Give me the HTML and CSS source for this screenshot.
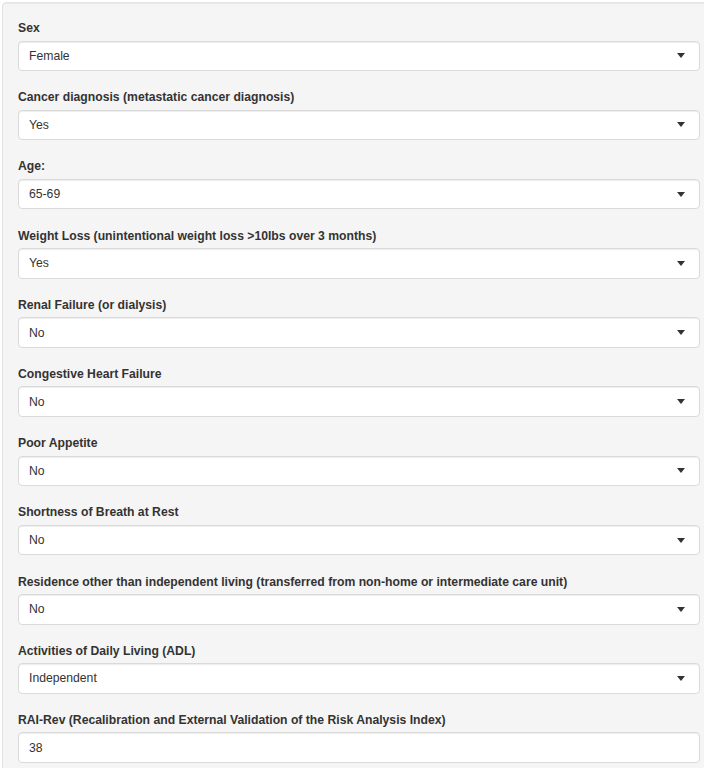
FILE: index.html
```html
<!DOCTYPE html>
<html>
<head>
<meta charset="utf-8">
<link rel="stylesheet" href="styles.css">
</head>
<body>
<div class="well">
  <div class="group">
    <label class="lbl">Sex</label>
    <div class="select"><span>Female</span><i class="caret"></i></div>
  </div>
  <div class="group">
    <label class="lbl">Cancer diagnosis (metastatic cancer diagnosis)</label>
    <div class="select"><span>Yes</span><i class="caret"></i></div>
  </div>
  <div class="group">
    <label class="lbl">Age:</label>
    <div class="select"><span>65-69</span><i class="caret"></i></div>
  </div>
  <div class="group">
    <label class="lbl">Weight Loss (unintentional weight loss &gt;10lbs over 3 months)</label>
    <div class="select"><span>Yes</span><i class="caret"></i></div>
  </div>
  <div class="group">
    <label class="lbl">Renal Failure (or dialysis)</label>
    <div class="select"><span>No</span><i class="caret"></i></div>
  </div>
  <div class="group">
    <label class="lbl">Congestive Heart Failure</label>
    <div class="select"><span>No</span><i class="caret"></i></div>
  </div>
  <div class="group">
    <label class="lbl">Poor Appetite</label>
    <div class="select"><span>No</span><i class="caret"></i></div>
  </div>
  <div class="group">
    <label class="lbl">Shortness of Breath at Rest</label>
    <div class="select"><span>No</span><i class="caret"></i></div>
  </div>
  <div class="group">
    <label class="lbl">Residence other than independent living (transferred from non-home or intermediate care unit)</label>
    <div class="select"><span>No</span><i class="caret"></i></div>
  </div>
  <div class="group">
    <label class="lbl">Activities of Daily Living (ADL)</label>
    <div class="select"><span>Independent</span><i class="caret"></i></div>
  </div>
  <div class="group">
    <label class="lbl">RAI-Rev (Recalibration and External Validation of the Risk Analysis Index)</label>
    <div class="select"><span>38</span></div>
  </div>
</div>
</body>
</html>
```

FILE: styles.css
```css
html, body {
  margin: 0;
  padding: 0;
  overflow: hidden;
  background: #ffffff;
}
body {
  font-family: "Liberation Sans", Arial, Helvetica, sans-serif;
  font-size: 12.2px;
  color: #333333;
}
.well {
  margin: 2px 0 0 2px;
  width: 682px;
  padding: 17px 15px 16px 15px;
  background: #f5f5f5;
  border: 1px solid #e3e3e3;
  border-radius: 4px;
  box-shadow: inset 0 1px 1px rgba(0,0,0,0.05);
}
.group {
  display: flex;
  flex-direction: column;
  margin-bottom: 18.2px;
}
.lbl {
  display: block;
  font-weight: bold;
  font-size: 12.2px;
  line-height: 17px;
  margin-bottom: 3.5px;
  color: #333333;
}
.select {
  box-sizing: border-box;
  height: 30.5px;
  background: #ffffff;
  border: 1px solid #dadada;
  border-radius: 4px;
  box-shadow: inset 0 1px 1px rgba(0,0,0,0.075);
  display: flex;
  align-items: center;
  justify-content: space-between;
  padding: 0 14px 0 10px;
  font-size: 12.2px;
  color: #333333;
}
.caret {
  width: 0;
  height: 0;
  border-left: 4.5px solid transparent;
  border-right: 4.5px solid transparent;
  border-top: 5px solid #333333;
}
```
